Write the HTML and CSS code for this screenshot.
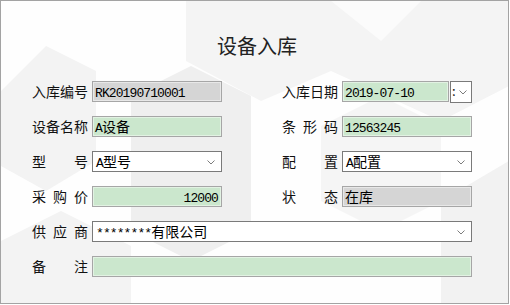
FILE: index.html
```html
<!DOCTYPE html>
<html lang="zh-CN">
<head>
    <meta charset="UTF-8">
    <title>设备入库</title>
    <link rel="stylesheet" href="styles.css">
</head>
<body>
<div class="window">
    <svg class="bg" width="508" height="303" viewBox="0 0 508 303">
        <polygon points="185,0 508,0 508,85 440,120 330,70 260,100 185,60" fill="#f4f4f4"/>
        <polygon points="330,0 420,0 380,40" fill="#fbfbfb"/>
        <polygon points="0,90 45,45 95,70 95,160 45,190 0,165" fill="#f3f3f3"/>
        <polygon points="130,95 190,65 250,95 250,230 190,260 130,230" fill="#efefef"/>
        <polygon points="380,95 440,125 440,200 380,230 320,200 320,125" fill="#f5f5f5"/>
        <polygon points="440,200 508,160 508,303 440,303" fill="#f2f2f2"/>
        <polygon points="0,240 60,210 130,245 130,303 0,303" fill="#f3f3f3"/>
    </svg>

    <div class="content">
        <h1>设备入库</h1>

        <div class="form">
            <div class="row">
                <div class="pair">
                    <span class="label">入库编号</span>
                    <div class="field gray"><span class="num">RK20190710001</span></div>
                </div>
                <div class="pair">
                    <span class="label">入库日期</span>
                    <div class="date">
                        <div class="field green"><span class="num">2019-07-10</span></div>
                        <div class="date-btn">
                            <span class="colon">:</span>
                            <svg class="chev" width="8" height="5" viewBox="0 0 8 5"><polyline points="0.5,0.5 4,4 7.5,0.5" fill="none" stroke="#7c7c7c" stroke-width="1"/></svg>
                        </div>
                    </div>
                </div>
            </div>

            <div class="row">
                <div class="pair">
                    <span class="label">设备名称</span>
                    <div class="field green"><span class="num">A</span>设备</div>
                </div>
                <div class="pair">
                    <span class="label">条形码</span>
                    <div class="field green"><span class="num">12563245</span></div>
                </div>
            </div>

            <div class="row">
                <div class="pair">
                    <span class="label">型号</span>
                    <div class="field select"><span class="num">A</span>型号
                        <svg class="chev" width="8" height="5" viewBox="0 0 8 5"><polyline points="0.5,0.5 4,4 7.5,0.5" fill="none" stroke="#7c7c7c" stroke-width="1"/></svg>
                    </div>
                </div>
                <div class="pair">
                    <span class="label">配置</span>
                    <div class="field select"><span class="num">A</span>配置
                        <svg class="chev" width="8" height="5" viewBox="0 0 8 5"><polyline points="0.5,0.5 4,4 7.5,0.5" fill="none" stroke="#7c7c7c" stroke-width="1"/></svg>
                    </div>
                </div>
            </div>

            <div class="row">
                <div class="pair">
                    <span class="label">采购价</span>
                    <div class="field green right"><span class="num">12000</span></div>
                </div>
                <div class="pair">
                    <span class="label">状态</span>
                    <div class="field gray">在库</div>
                </div>
            </div>

            <div class="row">
                <div class="pair wide">
                    <span class="label">供应商</span>
                    <div class="field select"><span class="num">********</span>有限公司
                        <svg class="chev" width="8" height="5" viewBox="0 0 8 5"><polyline points="0.5,0.5 4,4 7.5,0.5" fill="none" stroke="#7c7c7c" stroke-width="1"/></svg>
                    </div>
                </div>
            </div>

            <div class="row">
                <div class="pair wide">
                    <span class="label">备注</span>
                    <div class="field green"></div>
                </div>
            </div>
        </div>
    </div>
</div>
</body>
</html>
```

FILE: styles.css
```css
body {
    margin: 0;
    background-color: #ffffff;
    font-family: "Noto Sans CJK SC", sans-serif;
    color: #111;
}

.window {
    position: relative;
    width: 509px;
    height: 304px;
    box-sizing: border-box;
    border: 1px solid #a3a3a3;
    background-color: #fefefe;
    overflow: hidden;
}

.bg {
    position: absolute;
    left: 0;
    top: 0;
}

.content {
    position: relative;
}

h1 {
    margin: 35px 0 0 5px;
    text-align: center;
    font-size: 20px;
    line-height: 20px;
    font-weight: normal;
    color: #222;
}

.form {
    display: flex;
    flex-direction: column;
    gap: 14px;
    margin: 25px 0 0 31px;
}

.row {
    display: flex;
    gap: 60px;
    height: 21px;
}

.pair {
    display: flex;
    gap: 4px;
}

.label {
    width: 56px;
    font-size: 14px;
    line-height: 21px;
    text-align: justify;
    text-align-last: justify;
    white-space: nowrap;
}

.field {
    position: relative;
    width: 130px;
    height: 21px;
    box-sizing: border-box;
    padding: 0 3px 0 2px;
    border: 1px solid #a6a6a6;
    box-shadow: inset 0 0 0 1px rgba(255,255,255,0.45);
    font-size: 14px;
    line-height: 18px;
    white-space: nowrap;
    color: #000;
}

.wide .field {
    width: 380px;
}

.gray {
    background-color: #d5d5d5;
}

.green {
    background-color: #cbe7cd;
}

.right {
    text-align: right;
}

.select {
    background-color: #ffffff;
    border-color: #7a7a7a;
    box-shadow: none;
    padding-left: 3px;
}

.num {
    font-family: "Liberation Mono", monospace;
    font-size: 13px;
    letter-spacing: -0.9px;
}

.chev {
    position: absolute;
    right: 6px;
    top: 8px;
}

.date {
    display: flex;
    gap: 1px;
}

.date .field {
    width: 107px;
}

.date-btn {
    position: relative;
    width: 22px;
    height: 22px;
    box-sizing: border-box;
    border: 1px solid #7a7a7a;
    background-color: #ffffff;
    font-size: 13px;
    line-height: 18px;
}

.colon {
    padding-left: 1px;
}

.date-btn .chev {
    right: 4px;
}
```
